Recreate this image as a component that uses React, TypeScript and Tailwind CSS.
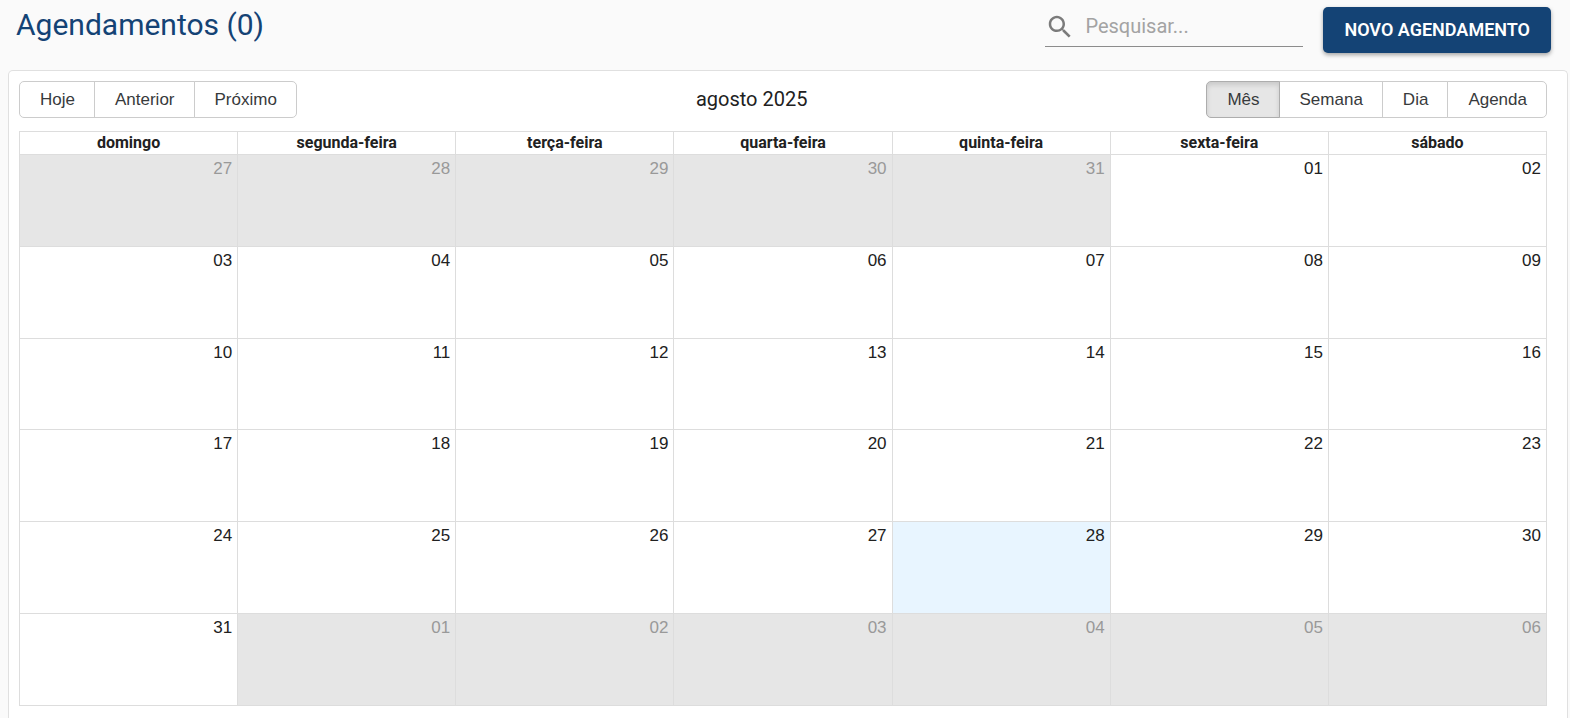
import { useState } from "react";

const weekdays = [
  "domingo",
  "segunda-feira",
  "terça-feira",
  "quarta-feira",
  "quinta-feira",
  "sexta-feira",
  "sábado",
];

const views = ["Mês", "Semana", "Dia", "Agenda"];

type Day = { label: string; outside: boolean; today: boolean };

function buildMonth(year: number, month: number, today: number): Day[][] {
  const offset = new Date(year, month, 1).getDay();
  return Array.from({ length: 6 }, (_, week) =>
    Array.from({ length: 7 }, (_, weekday) => {
      const date = new Date(year, month, week * 7 + weekday - offset + 1);
      const outside = date.getMonth() !== month;
      return {
        label: String(date.getDate()).padStart(2, "0"),
        outside,
        today: !outside && date.getDate() === today,
      };
    }),
  );
}

const weeks = buildMonth(2025, 7, 28);

const groupButton =
  "-ml-px h-[37px] border pl-5 pr-[19px] first:ml-0 first:rounded-l-[5px] last:rounded-r-[5px] font-['Liberation_Sans',sans-serif] text-[17px] leading-5 text-[#373a3c]";

function Header() {
  return (
    <header className="flex items-start justify-between pl-4 pr-[19px]">
      <h1 className="pt-[7px] text-3xl leading-9 text-[#144375]">Agendamentos (0)</h1>
      <div className="flex items-start gap-5 pt-[7px]">
        <label className="flex h-10 w-[258px] items-center gap-2.5 border-b border-[#8c8c8c]">
          <svg viewBox="0 0 24 24" className="size-[30px] shrink-0 fill-[#7b7b7b]" aria-hidden="true">
            <path d="M15.5 14h-.79l-.28-.27C15.41 12.59 16 11.11 16 9.5 16 5.91 13.09 3 9.5 3S3 5.91 3 9.5 5.91 16 9.5 16c1.61 0 3.09-.59 4.23-1.57l.27.28v.79l5 4.99L20.49 19l-4.99-5zm-6 0C7.01 14 5 11.99 5 9.5S7.01 5 9.5 5 14 7.01 14 9.5 11.99 14 9.5 14z" />
          </svg>
          <input
            type="search"
            aria-label="Pesquisar"
            placeholder="Pesquisar..."
            className="w-full min-w-0 bg-transparent pb-0.5 text-xl outline-none placeholder:text-[#a3a3a3]"
          />
        </label>
        <button
          type="button"
          className="h-[46px] rounded-[5px] bg-[#144375] px-[21px] text-lg font-semibold text-white shadow-[0_2px_4px_rgba(0,0,0,0.35)]"
        >
          NOVO AGENDAMENTO
        </button>
      </div>
    </header>
  );
}

export default function App() {
  const [view, setView] = useState("Mês");

  return (
    <div className="flex min-h-screen flex-col bg-[#fafafa] font-[Roboto,sans-serif] text-[#212121]">
      <div className="h-[70px] shrink-0">
        <Header />
      </div>
      <main className="ml-2 mr-0.5 grow rounded-t-[5px] border border-b-0 border-[#e0e0e0] bg-white pb-3 pl-2.5 pr-5 pt-2.5">
        <div className="mb-[13px] flex items-center">
          <div className="flex">
            {["Hoje", "Anterior", "Próximo"].map((name) => (
              <button key={name} type="button" className={`${groupButton} border-[#cccccc] bg-white`}>
                {name}
              </button>
            ))}
          </div>
          <h2 className="grow pb-0.5 text-center text-xl">agosto 2025</h2>
          <div className="flex">
            {views.map((name) => (
              <button
                key={name}
                type="button"
                aria-pressed={view === name}
                onClick={() => setView(name)}
                className={
                  view === name
                    ? `${groupButton} relative border-[#adadad] bg-[#e6e6e6] shadow-[inset_0_3px_5px_rgba(0,0,0,0.125)]`
                    : `${groupButton} border-[#cccccc] bg-white`
                }
              >
                {name}
              </button>
            ))}
          </div>
        </div>
        <table className="h-[575px] w-full table-fixed border-collapse">
          <thead>
            <tr className="h-[23px]">
              {weekdays.map((name) => (
                <th key={name} scope="col" className="border border-[#dddddd] p-0 text-base leading-5 font-bold">
                  {name}
                </th>
              ))}
            </tr>
          </thead>
          <tbody>
            {weeks.map((week, index) => (
              <tr key={index}>
                {week.map((day) => (
                  <td
                    key={day.label}
                    className={`border border-[#dddddd] px-[5px] pt-1 text-right align-top font-['Liberation_Sans',sans-serif] text-[17px] leading-5 ${
                      day.outside ? "bg-[#e6e6e6] text-[#999999]" : day.today ? "bg-[#e8f5ff]" : "bg-white"
                    }`}
                  >
                    {day.label}
                  </td>
                ))}
              </tr>
            ))}
          </tbody>
        </table>
      </main>
    </div>
  );
}
